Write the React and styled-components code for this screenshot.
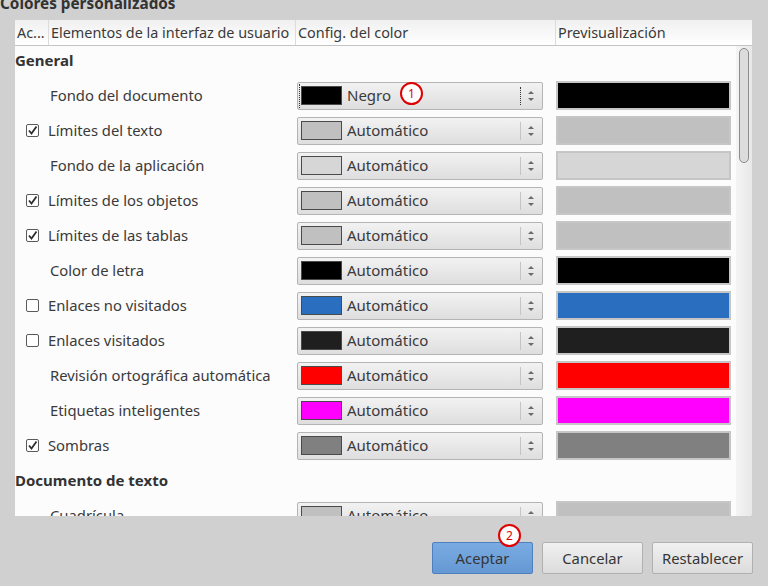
import React from 'react'
import styled, { createGlobalStyle, css } from 'styled-components'

const GlobalStyle = createGlobalStyle`
  html, body { margin: 0; padding: 0; }
  body {
    width: 768px;
    height: 586px;
    overflow: hidden;
    background: #d0d0d0;
    font-family: "Noto Sans", "Open Sans", sans-serif;
    color: #3a3a3a;
  }
`

const rows = [
  { section: 'General' },
  { label: 'Fondo del documento', color: '#000000', value: 'Negro', focused: true, mark: 1 },
  { label: 'Límites del texto', check: true, color: '#c0c0c0' },
  { label: 'Fondo de la aplicación', color: '#d6d6d6' },
  { label: 'Límites de los objetos', check: true, color: '#c0c0c0' },
  { label: 'Límites de las tablas', check: true, color: '#c0c0c0' },
  { label: 'Color de letra', color: '#000000' },
  { label: 'Enlaces no visitados', check: false, color: '#2a6ebf' },
  { label: 'Enlaces visitados', check: false, color: '#1f1f1f' },
  { label: 'Revisión ortográfica automática', color: '#ff0000' },
  { label: 'Etiquetas inteligentes', color: '#ff00ff' },
  { label: 'Sombras', check: true, color: '#808080' },
  { section: 'Documento de texto' },
  { label: 'Cuadrícula', color: '#c0c0c0' },
]

function App() {
  return (
    <>
      <GlobalStyle />
      <Dialog>
        <Title>Colores personalizados</Title>
        <Panel>
          <Header>
            <HeadCell $w={34}>Ac...</HeadCell>
            <HeadCell $w={247}>Elementos de la interfaz de usuario</HeadCell>
            <HeadCell $w={260}>Config. del color</HeadCell>
            <HeadCell $w={181}>Previsualización</HeadCell>
          </Header>
          <Body>
            <List>
              {rows.map((r, i) =>
                r.section ? (
                  <Section key={i} $first={i === 0}>{r.section}</Section>
                ) : (
                  <Row key={i}>
                    <LabelCell>
                      {r.check !== undefined ? (
                        <Check>
                          {r.check && (
                            <svg width="11" height="11" viewBox="0 0 11 11">
                              <path d="M2 5.5 L4.5 8.5 L9.5 1.5" fill="none" stroke="#2e2e2e" strokeWidth="1.8" />
                            </svg>
                          )}
                        </Check>
                      ) : (
                        <CheckSpace />
                      )}
                      <LabelText>{r.label}</LabelText>
                    </LabelCell>
                    <Select $focused={r.focused}>
                      <Swatch style={{ background: r.color }} />
                      <SelectText>{r.value || 'Automático'}</SelectText>
                      {r.mark && <Marker $top={-1} $left={102}>{r.mark}</Marker>}
                      <Spin $focused={r.focused}>
                        <svg width="8" height="14" viewBox="0 0 8 14">
                          <path d="M1 5 L4 2 L7 5 Z" fill="#6a6a6a" />
                          <path d="M1 9 L4 12 L7 9 Z" fill="#6a6a6a" />
                        </svg>
                      </Spin>
                    </Select>
                    <Preview style={{ background: r.color }} />
                  </Row>
                )
              )}
            </List>
            <Scrollbar>
              <Thumb />
            </Scrollbar>
          </Body>
        </Panel>
        <Footer>
          <Button $primary>
            Aceptar
            <Marker $top={-19} $left={65}>2</Marker>
          </Button>
          <Button>Cancelar</Button>
          <Button>Restablecer</Button>
        </Footer>
      </Dialog>
    </>
  )
}

const Dialog = styled.div`
  display: flex;
  flex-direction: column;
  width: 768px;
  height: 586px;
  overflow: hidden;
`

const Title = styled.div`
  margin-top: -7px;
  height: 27px;
  line-height: 20px;
  font-size: 15.3px;
  font-weight: bold;
  color: #333;
`

const Panel = styled.div`
  margin-left: 15px;
  width: 737px;
  height: 496px;
  display: flex;
  flex-direction: column;
  overflow: hidden;
  background: #fcfcfc;
  border-radius: 0 0 3px 0;
`

const Header = styled.div`
  display: flex;
  height: 25px;
  background: linear-gradient(#f0f0f0, #ffffff);
  border-bottom: 1px solid #c4c4c4;
`

const HeadCell = styled.div`
  width: ${p => p.$w}px;
  box-sizing: border-box;
  padding-left: 2px;
  font-size: 14.4px;
  line-height: 25px;
  white-space: nowrap;
  overflow: hidden;
  border-right: 1px solid #dcdcdc;
  &:last-child { border-right: none; }
`

const Body = styled.div`
  flex: 1;
  display: flex;
  min-height: 0;
`

const List = styled.div`
  flex: 1;
  overflow: hidden;
`

const Section = styled.div`
  height: ${p => (p.$first ? 32 : 35)}px;
  line-height: ${p => (p.$first ? 29 : 35)}px;
  font-size: 15px;
  font-weight: bold;
  color: #333;
`

const Row = styled.div`
  display: flex;
  align-items: center;
  height: 35px;
`

const LabelCell = styled.div`
  width: 282px;
  display: flex;
  align-items: center;
  white-space: nowrap;
`

const LabelText = styled.span`
  font-size: 14.8px;
  line-height: 18px;
  margin-top: -1px;
`

const Check = styled.span`
  box-sizing: border-box;
  width: 13px;
  height: 13px;
  margin: 0 9px 0 11px;
  border: 1px solid #5a5a5a;
  border-radius: 2px;
  background: #fff;
  display: flex;
  align-items: center;
  justify-content: center;
`

const CheckSpace = styled.span`
  width: 35px;
`

const Select = styled.div`
  position: relative;
  box-sizing: border-box;
  width: 246px;
  height: 28px;
  margin-right: 13px;
  display: flex;
  align-items: center;
  border: 1px solid #b4b4b4;
  border-radius: 2px;
  background: linear-gradient(#f2f2f2, #dedede);
  ${p => p.$focused && css`
    &::before {
      content: '';
      position: absolute;
      left: 1px;
      top: 1px;
      bottom: 1px;
      border-left: 1px dotted #333;
    }
  `}
`

const Swatch = styled.span`
  box-sizing: border-box;
  width: 41px;
  height: 19px;
  margin-left: 3px;
  border: 1px solid #4a4a4a;
`

const SelectText = styled.span`
  margin-left: 5px;
  margin-top: -2px;
  font-size: 15px;
  line-height: 20px;
  color: #3a3a3a;
  flex: 1;
`

const Spin = styled.span`
  width: 19px;
  height: 18px;
  display: flex;
  align-items: center;
  justify-content: center;
  border-left: 1px ${p => (p.$focused ? 'dotted #333' : 'solid #c4c4c4')};
  margin-right: 2px;
`

const Preview = styled.div`
  box-sizing: border-box;
  width: 175px;
  height: 29px;
  border: 2px solid #c6c6c6;
`

const Scrollbar = styled.div`
  width: 16px;
  padding-top: 2px;
  background: linear-gradient(90deg, #f4f4f4, #e8e8e8);
  display: flex;
  justify-content: center;
`

const Thumb = styled.div`
  box-sizing: border-box;
  width: 10px;
  height: 115px;
  border: 1px solid #8c8c8c;
  border-radius: 5px;
  background: #dcdcdc;
`

const Footer = styled.div`
  flex: 1;
  display: flex;
  justify-content: flex-end;
  align-items: flex-start;
  gap: 9px;
  padding: 26px 15px 0 0;
`

const Button = styled.div`
  position: relative;
  box-sizing: border-box;
  width: 101px;
  height: 32px;
  line-height: 30px;
  text-align: center;
  font-size: 14.8px;
  color: #353535;
  border-radius: 2px;
  border: 1px solid ${p => (p.$primary ? '#4d80bf' : '#b0b0b0')};
  background: ${p => (p.$primary ? 'linear-gradient(#7aabe2, #6598d3)' : 'linear-gradient(#f0f0f0, #dcdcdc)')};
`

const Marker = styled.span`
  position: absolute;
  top: ${p => p.$top}px;
  left: ${p => p.$left}px;
  box-sizing: border-box;
  width: 23px;
  height: 23px;
  border: 2px solid #e00000;
  border-radius: 50%;
  background: #fff;
  color: #e00000;
  font-size: 12px;
  line-height: 19px;
  text-align: center;
`

export default App
